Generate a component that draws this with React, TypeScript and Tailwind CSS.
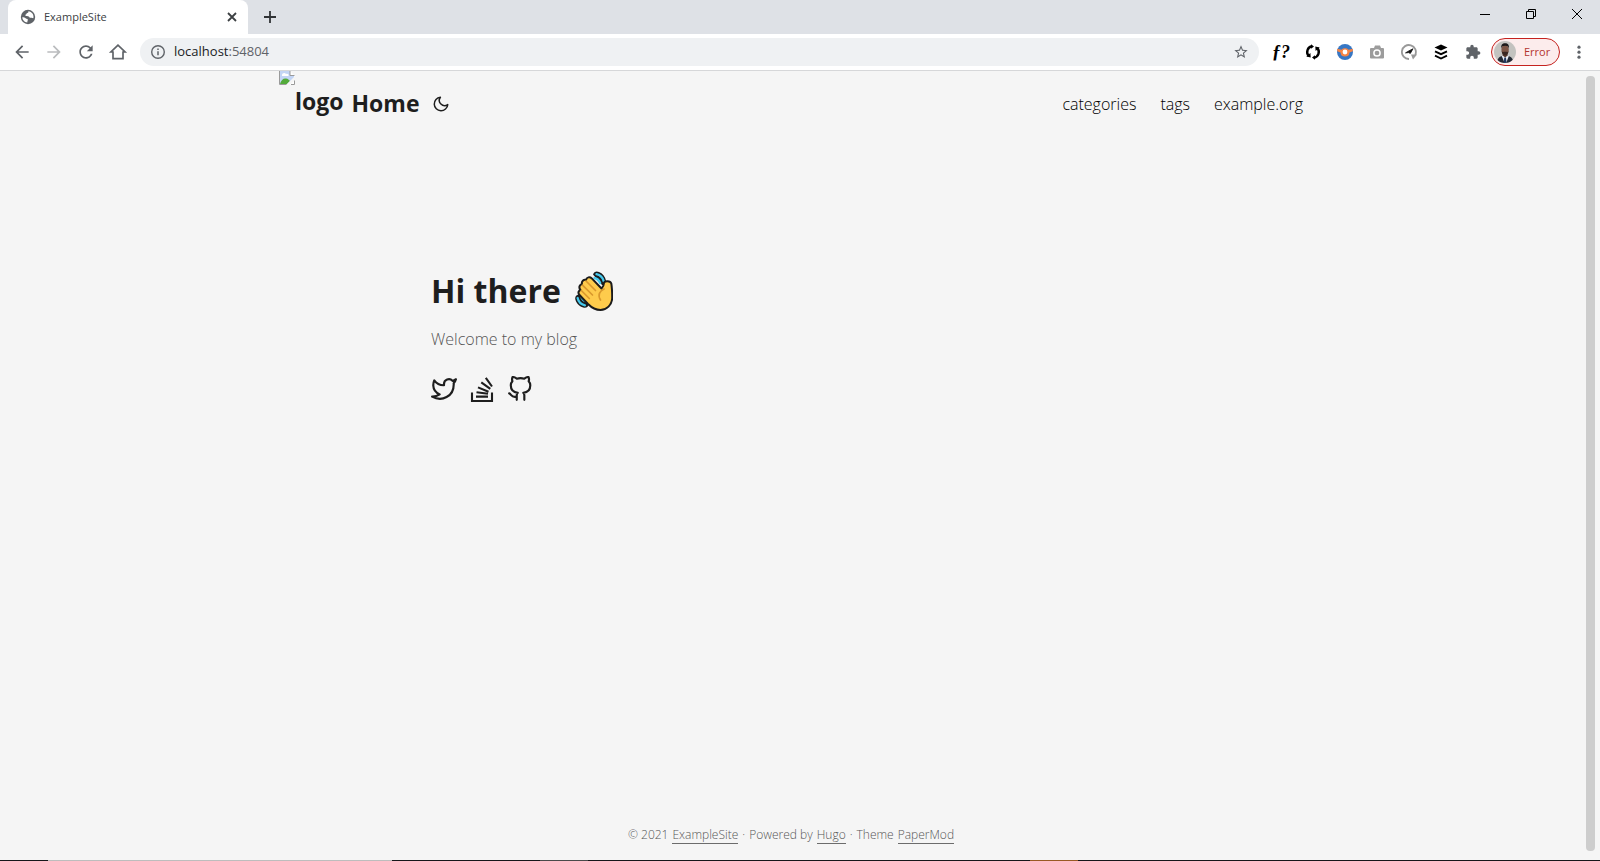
import type { ReactNode } from "react";

function Icon({ size = 16, box = "0 0 24 24", className = "", children }: { size?: number; box?: string; className?: string; children: ReactNode }) {
  return (
    <svg width={size} height={size} viewBox={box} className={`shrink-0 ${className}`} aria-hidden="true">
      {children}
    </svg>
  );
}

function Globe() {
  return (
    <Icon size={16} box="0 0 16 16">
      <circle cx="8" cy="8" r="7.2" fill="#5f6368" />
      <path d="M2.300 8.300c1.500 0 2.600.1 3.300.9.800.9 1.900.3 2.200 1.300.2.900-.5 1.300-.5 3C4.500 13.300 2.400 11 2.300 8.300z" fill="#fff" />
      <path d="M8.300 2.300c.3 1-.1 1.500-1 1.700-1 .2-.6 1.200-1.500 1.500-.7.3-.5 1.200.2 1.400 1.300.3 2.800-.2 3.300 1 .4.900 1.200.9 2 .8 1-.1 1.400.6 2.100.4.700-3.300-1.500-6.400-5.100-6.800z" fill="#fff" />
    </Icon>
  );
}

function Avatar() {
  return (
    <Icon size={22} box="0 0 22 22" className="rounded-full">
      <rect width="22" height="22" fill="#c3c2bf" />
      <path d="M3 22c.3-5 2.500-6.500 6-7.500h4c4 1 6 2.500 6.500 7.500z" fill="#252a35" />
      <path d="M7.500 14.500l3.200 7.500h1.500l2.800-7.500z" fill="#e9edf4" />
      <path d="M10.300 16.500h1.600l.8 5.500h-3z" fill="#23385f" />
      <path d="M8.600 11h5v3.500l-2.400 2-2.600-2z" fill="#57392c" />
      <ellipse cx="11.100" cy="8.700" rx="3.700" ry="5" fill="#7d5646" />
      <path d="M7.300 7.500c-.5-3.500 1-5.200 3.800-5.200s4.300 1.700 3.800 5.200c-.6-2-1-2.700-3.800-2.700S7.800 5.500 7.300 7.500z" fill="#1d1a1b" />
      <path d="M7.700 10c.8 1.500 1.700.8 3.400.8s2.600.7 3.400-.8c-.2 3-1.500 4.300-3.400 4.300S7.900 13 7.700 10z" fill="#3a2721" />
    </Icon>
  );
}

function Wave() {
  return (
    <svg width="38" height="40" viewBox="0 0 38 40" className="shrink-0" role="img" aria-label="waving hand">
      <g fill="#1b1b1b">
        <path d="M18 3.500C19 .5 21.500-.2 24 1c3.500 1.300 6.200 4.500 7 8.500.4 3-1.500 5-4 4.500z" />
        <path d="M5 23.500c-4 0-5.500 2.500-4.500 5.500 1.300 4 4.500 7 8.500 7.700 3 .4 5-1.500 4.500-4z" />
      </g>
      <g fill="none" stroke="#45c9ee" strokeWidth="2.300" strokeLinecap="round">
        <path d="M21.500 3.200c3.500.8 6.300 3.500 7.300 7.300M19.500 7c2.500.5 4.500 2.300 5.700 5" />
        <path d="M2.600 27c.8 3.700 3.500 6.400 7.300 7.300M6.200 25.500c.6 2.400 2.400 4.200 4.900 5" />
      </g>
      <path d="M13 33L4.500 24c-2-2.200-.8-4.500 1-5-2.300-2.700-.6-5.500 1.500-5.700-.8-3 1.600-5 4-4.300.6-3 3.800-3.500 5.800-1.600L26.500 17.500c1.500-1.500 2.300-3 2.500-5.500.4-2.500 6.400-2.500 7.300.5.900 5 .9 9 .9 14.500C37 34 31.500 39 25.500 39 20 39 16 36 13 33z" fill="#fecb4c" stroke="#1b1b1b" strokeWidth="2" strokeLinejoin="round" />
      <g fill="none" stroke="#d9982d" strokeWidth="1.700" strokeLinecap="round">
        <path d="M11 10l9.500 9.500M7.500 14.200l10 9.800M6.300 19.500l8 8M29 18c-4.500 2-6.500 6-3.500 11" />
      </g>
    </svg>
  );
}

function Extensions() {
  return (
    <>
      <button aria-label="Font finder" className="flex w-4 justify-center font-['Liberation_Serif',serif] text-lg leading-6 font-bold text-black italic">
        ƒ?
      </button>
      <button aria-label="Sync">
        <Icon size={16} box="0 0 16 16">
          <g fill="none" stroke="#000" strokeWidth="2.400">
            <path d="M7 2.300A5.800 5.800 0 0 0 3.700 11.900" />
            <path d="M9 13.700A5.800 5.800 0 0 0 12.300 4.100" />
          </g>
          <path d="M6 .2l3 2.300-3 2.300zM10 11.200v4.600l-3-2.300zM1.300 12.600l4.400.9-.3-4.500zM14.700 3.400l-4.400-.9.3 4.500z" />
        </Icon>
      </button>
      <button aria-label="Bookmark manager">
        <Icon size={16} box="0 0 16 16">
          <circle cx="8" cy="8" r="8" fill="#3777c4" />
          <path d="M.2 4.800l4.300.9C5.600 4.600 6.600 4.200 8 4.200s2.400.4 3.500 1.500l4.300-.9v2.400l-3.300 1.300C12.300 11.500 10.500 12.500 8 12.500S3.700 11.500 3.500 8.500L.2 7.200z" fill="#f58445" />
          <circle cx="8" cy="8" r="2.400" fill="#fff" />
        </Icon>
      </button>
      <button aria-label="Screenshot">
        <Icon size={16} box="0 0 16 16">
          <path d="M2 4h3l1-2.500h5L12 4h2q1 0 1 1v8.500q0 1-1 1H2q-1 0-1-1V5q0-1 1-1z" fill="#9c9c9c" />
          <circle cx="8" cy="9" r="3.100" fill="none" stroke="#fff" strokeWidth="1.500" />
        </Icon>
      </button>
      <button aria-label="Page speed">
        <Icon size={16} box="0 0 16 16">
          <path d="M8 15A7 7 0 1 1 14.200 11" fill="none" stroke="#999" strokeWidth="1.800" />
          <path d="M10 10.500h6L12 15.500z" fill="#999" />
          <path d="M12 4.800L9.300 9.500 7.800 8.600 4.500 8.900l3.300-2z" fill="#111" stroke="#111" strokeWidth=".8" />
        </Icon>
      </button>
      <button aria-label="Buffer">
        <Icon size={16} box="0 0 16 16">
          <path d="M8 .6L14.500 3.600 8 6.600 1.500 3.600z" />
          <path d="M2 7.300L8 10.100l6-2.800M2 11.700L8 14.500l6-2.800" fill="none" stroke="#000" strokeWidth="1.900" />
        </Icon>
      </button>
      <button aria-label="Extensions">
        <Icon size={16} className="text-[#5f6368]">
          <path fill="currentColor" d="M20.500 11H19V7c0-1.100-.9-2-2-2h-4V3.500C13 2.120 11.880 1 10.500 1S8 2.120 8 3.500V5H4c-1.100 0-1.990.9-1.990 2v3.800H3.500c1.490 0 2.700 1.210 2.700 2.700s-1.210 2.700-2.700 2.700H2V20c0 1.100.9 2 2 2h3.800v-1.500c0-1.490 1.210-2.700 2.700-2.700 1.490 0 2.700 1.210 2.700 2.700V22H17c1.100 0 2-.9 2-2v-4h1.500c1.380 0 2.500-1.120 2.500-2.500S21.880 11 20.500 11z" />
        </Icon>
      </button>
    </>
  );
}

function BrowserChrome() {
  return (
    <header className="shrink-0">
      <div className="flex h-[34px] items-stretch justify-between bg-[#dee1e6] pl-2">
        <div className="flex">
          <div className="flex w-60 items-center rounded-t-lg bg-white pr-2.5 pl-3">
            <Globe />
            <span className="grow pl-2 text-[11px] text-[#3c4043]">ExampleSite</span>
            <button aria-label="Close tab">
              <Icon size={12} box="0 0 12 12">
                <path d="M2 2l8 8M10 2l-8 8" stroke="#3c4043" strokeWidth="1.800" />
              </Icon>
            </button>
          </div>
          <button aria-label="New tab" className="pl-4">
            <Icon size={12} box="0 0 12 12">
              <path d="M6 0v12M0 6h12" stroke="#303336" strokeWidth="1.800" />
            </Icon>
          </button>
        </div>
        <div className="flex h-7 items-center">
          <button aria-label="Minimize" className="flex w-[46px] justify-center">
            <Icon size={10} box="0 0 10 10"><path d="M0 5.500h10" stroke="#000" /></Icon>
          </button>
          <button aria-label="Restore" className="flex w-[46px] justify-center">
            <Icon size={10} box="0 0 10 10"><path d="M.5 2.500h7v7h-7zM2.500 2.500v-2h7v7h-2" fill="none" stroke="#000" /></Icon>
          </button>
          <button aria-label="Close" className="flex w-[46px] justify-center">
            <Icon size={10} box="0 0 10 10"><path d="M0 0l10 10M10 0L0 10" stroke="#000" /></Icon>
          </button>
        </div>
      </div>
      <div className="flex h-[37px] items-center border-b border-[#d6d7d9] bg-white pr-3.5 pl-3">
        <div className="flex items-center gap-3 pr-3 text-[#5f6368]">
          <button aria-label="Back">
            <Icon size={20}><path fill="currentColor" d="M20 11H7.830l5.590-5.590L12 4l-8 8 8 8 1.410-1.410L7.830 13H20v-2z" /></Icon>
          </button>
          <button aria-label="Forward" className="text-[#babcbe]">
            <Icon size={20}><path fill="currentColor" d="M12 4l-1.410 1.410L16.170 11H4v2h12.170l-5.580 5.590L12 20l8-8z" /></Icon>
          </button>
          <button aria-label="Reload">
            <Icon size={20}><path fill="currentColor" d="M17.650 6.350C16.200 4.900 14.210 4 12 4c-4.420 0-7.990 3.580-7.990 8s3.570 8 7.990 8c3.730 0 6.840-2.550 7.730-6h-2.080c-.82 2.330-3.040 4-5.650 4-3.310 0-6-2.690-6-6s2.690-6 6-6c1.660 0 3.140.69 4.220 1.780L13 11h7V4l-2.350 2.350z" /></Icon>
          </button>
          <button aria-label="Home">
            <Icon size={20}><path d="M12 3.800L3.500 12H6v8h12v-8h2.500z" fill="none" stroke="currentColor" strokeWidth="2" /></Icon>
          </button>
        </div>
        <div className="flex h-7 grow items-center rounded-full bg-[#eff1f3] px-2.5">
          <Icon size={16} box="0 0 16 16">
            <circle cx="8" cy="8" r="6.300" fill="none" stroke="#5f6368" strokeWidth="1.400" />
            <path d="M8 7.200v4M8 4.500v1.500" stroke="#5f6368" strokeWidth="1.500" />
          </Icon>
          <span className="grow pl-2 text-[13px] text-[#202124]">
            localhost<span className="text-[#5f6368]">:54804</span>
          </span>
          <button aria-label="Bookmark this page">
            <Icon size={16} className="text-[#5f6368]">
              <path fill="currentColor" d="M22 9.240l-7.190-.62L12 2 9.190 8.630 2 9.240l5.460 4.730L5.820 21 12 17.270 18.180 21l-1.630-7.030L22 9.240zM12 15.400l-3.760 2.270 1-4.280-3.320-2.880 4.380-.38L12 6.100l1.710 4.040 4.380.38-3.320 2.880 1 4.280L12 15.400z" />
            </Icon>
          </button>
        </div>
        <div className="flex items-center gap-4 pr-2.5 pl-3.5">
          <Extensions />
        </div>
        <button className="flex h-7 w-[69px] items-center gap-2 rounded-full border border-[#c5221f] bg-[#fcecec] pl-0.5 text-[11px] text-[#b3352f]">
          <Avatar />
          Error
        </button>
        <button aria-label="Menu" className="pl-3">
          <Icon size={14} box="0 0 14 14" className="text-[#5f6368]">
            <g fill="currentColor"><circle cx="7" cy="2.200" r="1.600" /><circle cx="7" cy="7.200" r="1.600" /><circle cx="7" cy="12.200" r="1.600" /></g>
          </Icon>
        </button>
      </div>
    </header>
  );
}

function BrokenImage() {
  return (
    <svg width="16" height="14" viewBox="0 0 16 14" className="shrink-0" aria-hidden="true">
      <path d="M0 0h11l5 5v9H0z" fill="#fff" />
      <path d="M1 0h10v4h4v4l-5 5H1z" fill="#c3d5f5" />
      <path d="M3 4c0-2 3-3 4-1 2-.5 3 .5 2.500 2H3z" fill="#fff" />
      <path d="M1 13c1-4 3.500-6 6-5.500 2 .2 3 1.500 4 2.500L8 13z" fill="#53ab3a" />
      <path d="M.5 0v13.500H8M12 13.500h3.500V8M11 0v4.500h4.500" fill="none" stroke="#9a9a9a" />
      <path d="M16 5l-9 9h4l5-5z" fill="#f5f5f5" />
    </svg>
  );
}

const menu = ["categories", "tags", "example.org"];

const underlined = "border-b border-[#6c6c6c]";

export default function App() {
  return (
    <div className="flex min-h-screen flex-col bg-[#f5f5f5] font-['Open_Sans','Noto_Sans',sans-serif] text-[#1e1e1e]">
      <BrowserChrome />
      <div className="flex grow">
        <div className="flex grow flex-col">
          <nav className="mx-auto flex h-[60px] w-full max-w-[1072px] justify-between px-6">
            <div className="flex items-start">
              <a href="#home" className="flex items-start gap-2 text-[23px] font-bold">
                <span className="flex items-start leading-[60px]">
                  <BrokenImage />
                  logo
                </span>
                <span className="leading-[64px]">Home</span>
              </a>
              <button aria-label="Toggle theme" className="flex h-[66px] items-center pl-3">
                <Icon size={18}>
                  <path d="M21 12.790A9 9 0 1 1 11.210 3 7 7 0 0 0 21 12.790z" fill="none" stroke="currentColor" strokeWidth="2" strokeLinecap="round" strokeLinejoin="round" />
                </Icon>
              </button>
            </div>
            <ul className="flex gap-6 text-base leading-[66px] font-light text-black">
              {menu.map((item) => (
                <li key={item}><a href={`#${item}`}>{item}</a></li>
              ))}
            </ul>
          </nav>
          <main className="mx-auto w-full max-w-[768px] grow px-6 pt-[136px]">
            <h1 className="flex items-center gap-3.5 text-[32px] leading-[48px] font-bold">
              Hi there <Wave />
            </h1>
            <p className="pt-3 text-base leading-6 font-light text-[#555555]">Welcome to my blog</p>
            <div className="flex gap-3 pt-[25px]">
              <a href="#twitter" aria-label="Twitter">
                <Icon size={26}>
                  <path d="M23 3a10.900 10.900 0 0 1-3.140 1.530 4.480 4.480 0 0 0-7.860 3v1A10.660 10.660 0 0 1 3 4s-4 9 5 13a11.640 11.640 0 0 1-7 2c9 5 20 0 20-11.500a4.500 4.500 0 0 0-.08-.83A7.720 7.720 0 0 0 23 3z" fill="none" stroke="currentColor" strokeWidth="2" strokeLinecap="round" strokeLinejoin="round" />
                </Icon>
              </a>
              <a href="#stackoverflow" aria-label="Stack Overflow">
                <Icon size={26} box="0 0 26 26">
                  <path d="M3 16.500v8.500h20v-8.500M7 20.600h12M7.500 16.200l11.500 1.600M9 11.400l10.500 4.400M12.300 6.300l9 6.600M16.800 1.800l6.200 8.700" fill="none" stroke="currentColor" strokeWidth="2.100" />
                </Icon>
              </a>
              <a href="#github" aria-label="GitHub">
                <Icon size={26}>
                  <path d="M9 19c-5 1.500-5-2.500-7-3m14 6v-3.870a3.370 3.370 0 0 0-.94-2.610c3.140-.35 6.440-1.540 6.440-7A5.440 5.440 0 0 0 20 4.770 5.070 5.070 0 0 0 19.910 1S18.730.65 16 2.480a13.380 13.380 0 0 0-7 0C6.270.65 5.090 1 5.090 1A5.070 5.070 0 0 0 5 4.770a5.440 5.440 0 0 0-1.500 3.780c0 5.420 3.300 6.610 6.440 7A3.370 3.370 0 0 0 9 18.130V22" fill="none" stroke="currentColor" strokeWidth="2" strokeLinecap="round" strokeLinejoin="round" />
                </Icon>
              </a>
            </div>
          </main>
          <footer className="flex justify-center gap-1 pb-4 text-xs leading-4 font-light text-[#555555]">
            <span>© 2021</span>
            <a href="#site" className={underlined}>ExampleSite</a>
            <span>·</span>
            <span>Powered by</span>
            <a href="#hugo" className={underlined}>Hugo</a>
            <span>·</span>
            <span>Theme</span>
            <a href="#papermod" className={underlined}>PaperMod</a>
          </footer>
        </div>
        <div className="flex w-[18px] shrink-0 pt-[5px] pr-[5px] pb-[9px] pl-1" aria-hidden="true">
          <div className="grow rounded-sm bg-[#cdcdcd]" />
        </div>
      </div>
      <div className="flex h-px shrink-0 bg-[#16161a]" aria-hidden="true">
        <div className="ml-12 w-[344px] bg-[#bdbdbd]" />
        <div className="ml-[148px] w-12 bg-[#4a4a4a]" />
        <div className="ml-[442px] w-12 bg-[#9a5a24]" />
      </div>
    </div>
  );
}
